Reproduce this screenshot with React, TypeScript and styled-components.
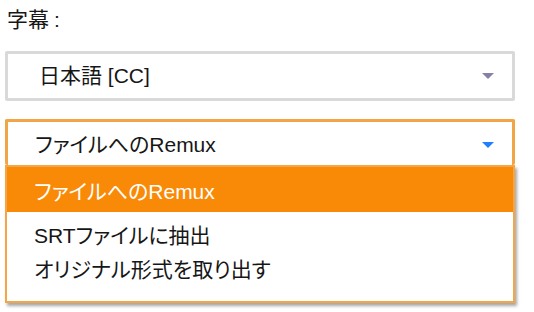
import React from 'react'
import styled, { createGlobalStyle } from 'styled-components';

const GlobalStyle = createGlobalStyle`
    html, body {
        margin: 0;
        padding: 0;
        background: #ffffff;
    }
    body {
        font-family: 'Liberation Sans', 'Noto Sans CJK JP', sans-serif;
        font-feature-settings: 'palt';
        color: #161616;
    }
`;

const options = ['ファイルへのRemux', 'SRTファイルに抽出', 'オリジナル形式を取り出す'];

const App = () => {
    const selected = 0;
    return (
        <Page>
            <GlobalStyle />
            <Label>字幕<span className="colon">:</span></Label>
            <Select>
                <span className="value">日本語 [CC]</span>
                <Arrow $color="#8580a6" />
            </Select>
            <DropWrap>
                <Select $open>
                    <span className="value">{options[selected]}</span>
                    <Arrow $color="#1f7fff" />
                </Select>
                <Menu>
                    <Option $active>{options[0]}</Option>
                    <Rest>
                        {options.slice(1).map((o) => (
                            <Option key={o}>{o}</Option>
                        ))}
                    </Rest>
                </Menu>
            </DropWrap>
        </Page>
    )
}

export default App

const Page = styled.div`
    width: 534px;
    height: 312px;
    padding: 4px 19px 0 5px;
    box-sizing: border-box;
    display: flex;
    flex-direction: column;
`;

const Label = styled.div`
    font-size: 21px;
    line-height: 31px;
    height: 47px;
    padding-left: 2px;
    .colon {
        margin-left: 5px;
    }
`;

const Select = styled.div<{ $open?: boolean }>`
    position: relative;
    display: flex;
    align-items: center;
    justify-content: space-between;
    box-sizing: border-box;
    height: ${(p) => (p.$open ? '46px' : '50px')};
    border: ${(p) => (p.$open ? '3px solid #f2a546' : '3px solid #d9d9d9')};
    border-bottom: ${(p) => (p.$open ? 'none' : '3px solid #d9d9d9')};
    border-radius: 2px;
    padding: ${(p) => (p.$open ? '2px 18px 0 27px' : '0 18px 0 31px')};
    background: #ffffff;
    .value {
        font-size: 21px;
        line-height: 26px;
        white-space: nowrap;
    }
`;

const Arrow = styled.span<{ $color: string }>`
    width: 0;
    height: 0;
    border-left: 6px solid transparent;
    border-right: 6px solid transparent;
    border-top: 6px solid ${(p) => p.$color};
`;

const DropWrap = styled.div`
    position: relative;
    margin-top: 18px;
`;

const Menu = styled.div`
    position: absolute;
    top: 46px;
    left: 0;
    right: 0;
    box-sizing: border-box;
    border: 2px solid #f5a543;
    background: #ffffff;
    box-shadow: 2px 3px 3px rgba(0, 0, 0, 0.35);
    padding-bottom: 16px;
`;

const Rest = styled.div`
    display: flex;
    flex-direction: column;
    padding-top: 5px;
`;

const Option = styled.div<{ $active?: boolean }>`
    display: flex;
    align-items: center;
    height: ${(p) => (p.$active ? '45px' : '34px')};
    padding-left: 27px;
    font-size: 21px;
    white-space: nowrap;
    background: ${(p) => (p.$active ? '#f98a08' : 'transparent')};
    color: ${(p) => (p.$active ? '#ffffff' : '#161616')};
`;
